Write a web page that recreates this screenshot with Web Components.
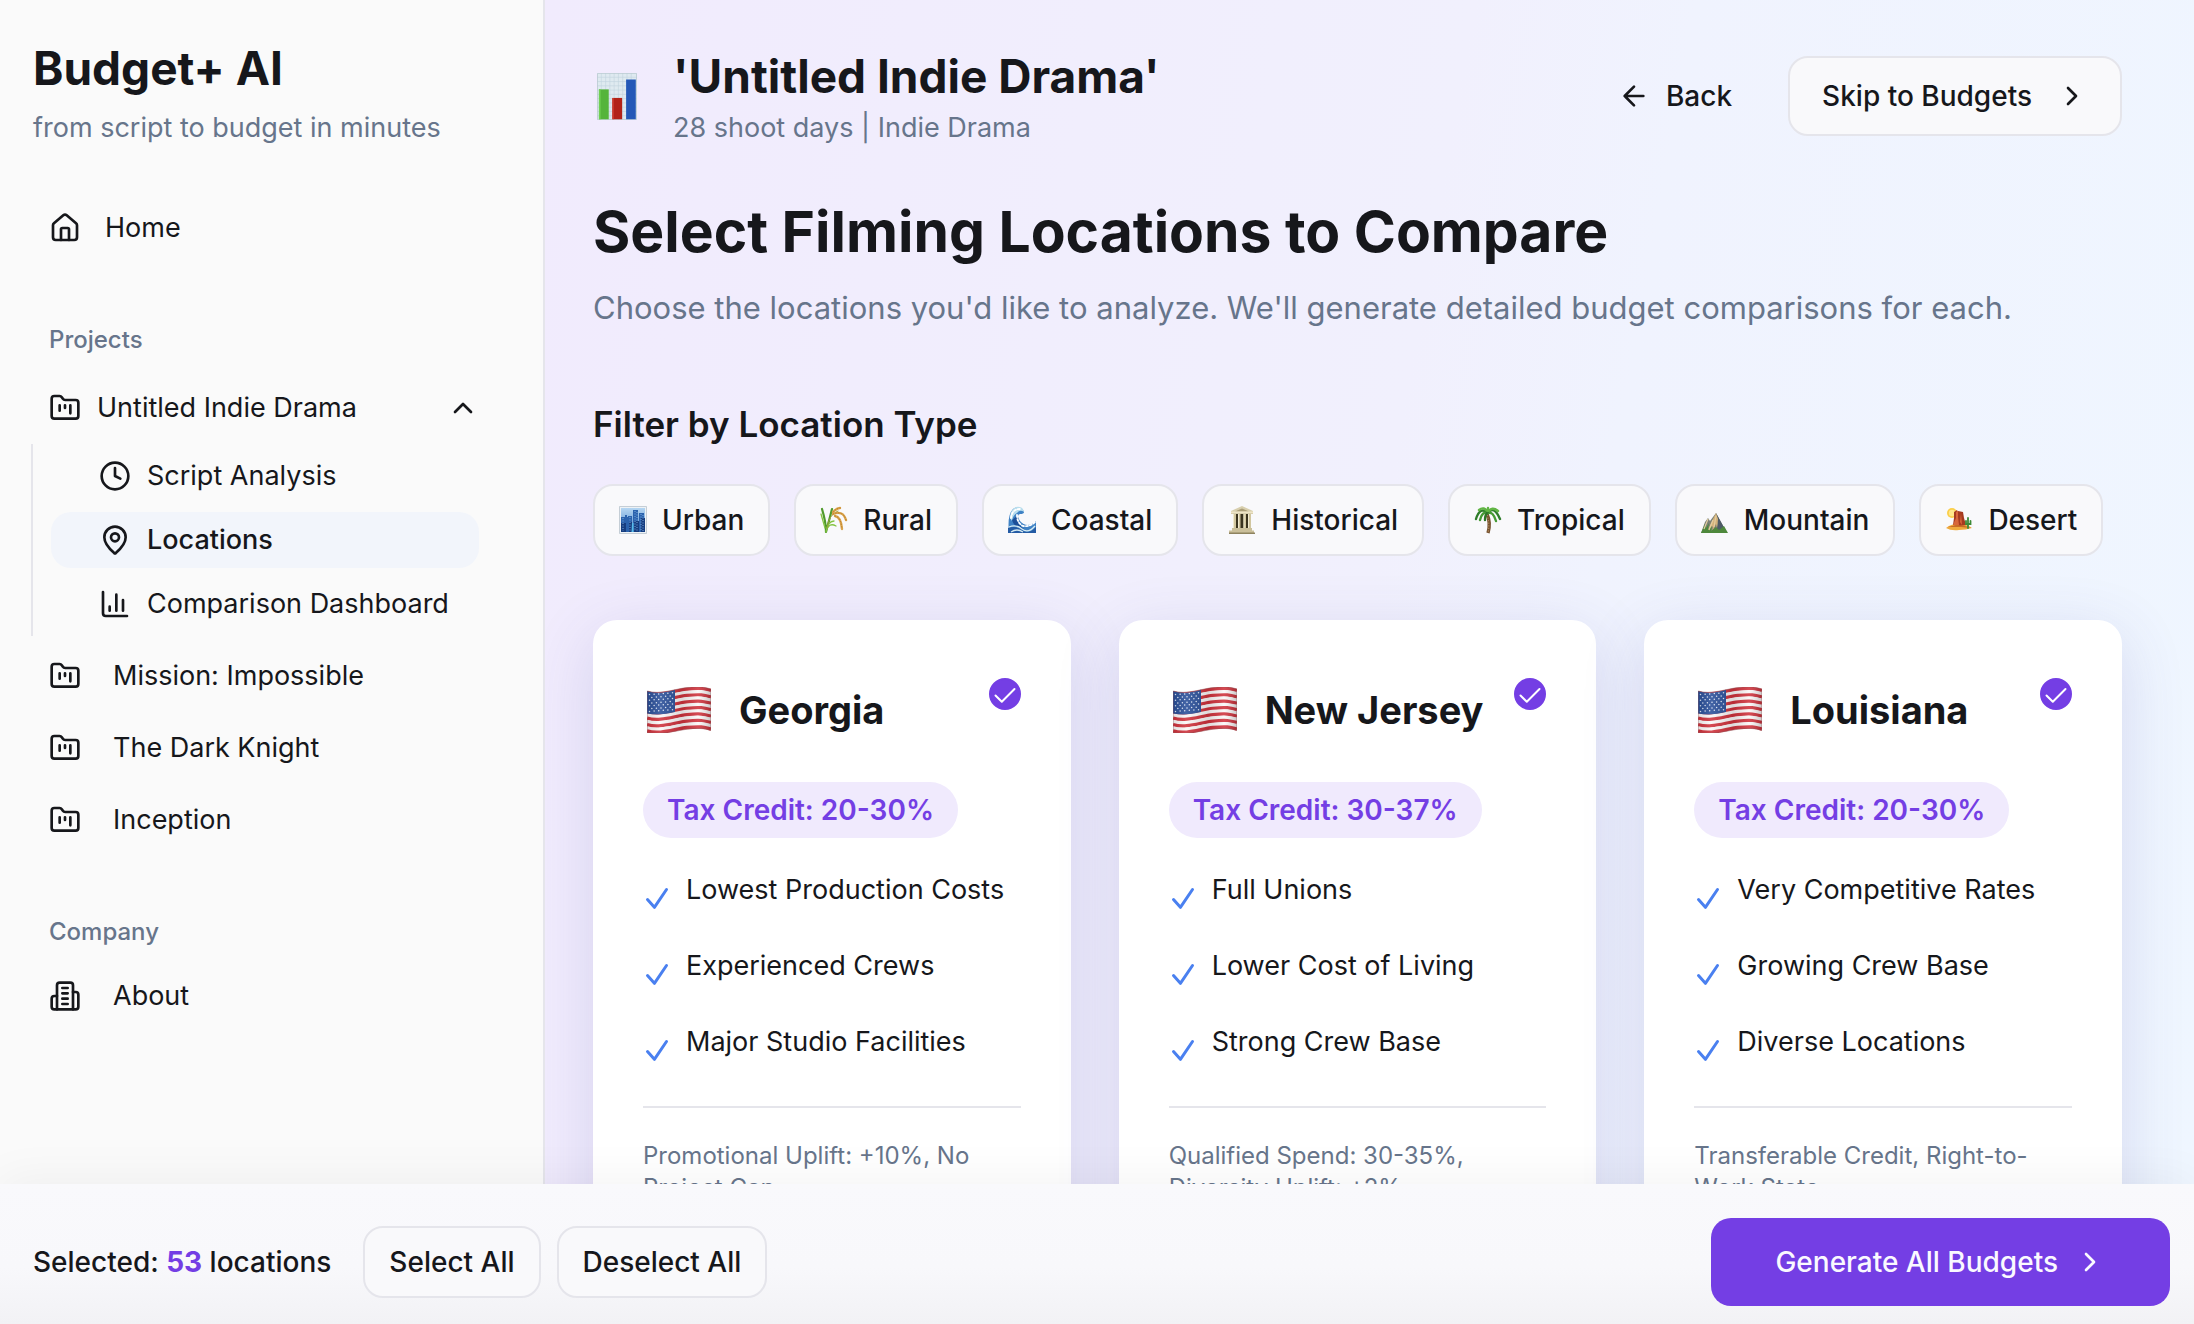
<!DOCTYPE html>
<html lang="en">
<head>
<meta charset="utf-8">
<meta name="viewport" content="width=device-width, initial-scale=1">
<title>Budget+ AI</title>
<style>
  :root {
    --ink: #16171b;
    --muted: #67758b;
    --line: #e5e5eb;
    --panel: #fafafa;
    --button: #f9f9fb;
    --accent: #743ee4;
    --accent-soft: #f0eafd;
    --blue: #4a80f0;
    --radius: 20px;
    --text: 27px;
    --title: 46px;
  }
  html, body { height: 100%; }
  body {
    margin: 0;
    font: 400 28px/40px Inter, "Liberation Sans", sans-serif;
    color: var(--ink);
    background: var(--panel);
  }
</style>
</head>
<body>
<app-shell>
  <side-bar slot="side">
    <nav-item icon="home" gap="24">Home</nav-item>
    <nav-group label="Projects" class="projects">
      <nav-toggle>Untitled Indie Drama</nav-toggle>
      <nav-branch>
        <nav-item icon="clock" nested>Script Analysis</nav-item>
        <nav-item icon="pin" nested current>Locations</nav-item>
        <nav-item icon="chart" nested>Comparison Dashboard</nav-item>
      </nav-branch>
      <nav-list>
        <nav-item icon="folder">Mission: Impossible</nav-item>
        <nav-item icon="folder">The Dark Knight</nav-item>
        <nav-item icon="folder">Inception</nav-item>
      </nav-list>
    </nav-group>
    <nav-group label="Company" class="company">
      <nav-item icon="building">About</nav-item>
    </nav-group>
  </side-bar>

  <project-header>
    <span slot="title">'Untitled Indie Drama'</span>
    <span slot="meta">28 shoot days | Indie Drama</span>
    <action-button kind="plain" slot="actions"><app-icon name="arrow-left" slot="before"></app-icon>Back</action-button>
    <action-button kind="outline-lg" slot="actions">Skip to Budgets<app-icon name="chevron-right" slot="after"></app-icon></action-button>
  </project-header>

  <page-intro>
    <span slot="title">Select Filming Locations to Compare</span>
    <span slot="lead">Choose the locations you'd like to analyze. We'll generate detailed budget comparisons for each.</span>
  </page-intro>

  <location-filter label="Filter by Location Type">
    <filter-chip icon="urban">Urban</filter-chip>
    <filter-chip icon="rural">Rural</filter-chip>
    <filter-chip icon="coastal">Coastal</filter-chip>
    <filter-chip icon="historical">Historical</filter-chip>
    <filter-chip icon="tropical">Tropical</filter-chip>
    <filter-chip icon="mountain">Mountain</filter-chip>
    <filter-chip icon="desert">Desert</filter-chip>
  </location-filter>

  <card-grid>
    <location-card name="Georgia" credit="20-30%">
      <feature-item>Lowest Production Costs</feature-item>
      <feature-item>Experienced Crews</feature-item>
      <feature-item>Major Studio Facilities</feature-item>
      <span slot="note">Promotional Uplift: +10%, No Project Cap</span>
    </location-card>
    <location-card name="New Jersey" credit="30-37%">
      <feature-item>Full Unions</feature-item>
      <feature-item>Lower Cost of Living</feature-item>
      <feature-item>Strong Crew Base</feature-item>
      <span slot="note">Qualified Spend: 30-35%, Diversity Uplift: +2%</span>
    </location-card>
    <location-card name="Louisiana" credit="20-30%">
      <feature-item>Very Competitive Rates</feature-item>
      <feature-item>Growing Crew Base</feature-item>
      <feature-item>Diverse Locations</feature-item>
      <span slot="note">Transferable Credit, Right-to-Work State</span>
    </location-card>
  </card-grid>

  <selection-bar slot="bar" count="53">
    <action-button kind="outline" slot="tools">Select All</action-button>
    <action-button kind="outline" slot="tools">Deselect All</action-button>
    <action-button kind="primary" slot="submit">Generate All Budgets<app-icon name="chevron-right" slot="after"></app-icon></action-button>
  </selection-bar>
</app-shell>

<script>
const define = (tag, render) => customElements.define(tag, class extends HTMLElement {
  constructor() {
    super();
    this.attachShadow({ mode: 'open' });
  }
  connectedCallback() {
    this.shadowRoot.innerHTML = '<style>:host,*{box-sizing:border-box}</style>' + render(this);
  }
});

/* Line icons on a 24-unit grid */
const LINES = {
  home: '<path d="M15 21v-8a1 1 0 0 0-1-1h-4a1 1 0 0 0-1 1v8"/><path d="M3 10a2 2 0 0 1 .71-1.53l7-6a2 2 0 0 1 2.58 0l7 6A2 2 0 0 1 21 10v9a2 2 0 0 1-2 2H5a2 2 0 0 1-2-2z"/>',
  folder: '<path d="M4 20h16a2 2 0 0 0 2-2V8a2 2 0 0 0-2-2h-7.93a2 2 0 0 1-1.66-.9l-.82-1.2A2 2 0 0 0 7.93 3H4a2 2 0 0 0-2 2v13c0 1.1.9 2 2 2Z"/><path d="M8 10v4M12 10v2M16 10v6"/>',
  clock: '<circle cx="12" cy="12" r="10"/><path d="M12 6v6l4 2"/>',
  pin: '<path d="M20 10c0 5-5.54 10.19-7.4 11.8a1 1 0 0 1-1.2 0C9.54 20.19 4 15 4 10a8 8 0 0 1 16 0"/><circle cx="12" cy="10" r="3"/>',
  chart: '<path d="M3 3v16a2 2 0 0 0 2 2h16M18 17V9M13 17V5M8 17v-3"/>',
  building: '<path d="M6 22V4a2 2 0 0 1 2-2h8a2 2 0 0 1 2 2v18Z"/><path d="M6 12H4a2 2 0 0 0-2 2v6a2 2 0 0 0 2 2h2M18 9h2a2 2 0 0 1 2 2v9a2 2 0 0 1-2 2h-2M10 6h4M10 10h4M10 14h4M10 18h4"/>',
  'chevron-up': '<path d="m18 15-6-6-6 6"/>',
  'chevron-right': '<path d="m9 18 6-6-6-6"/>',
  'arrow-left': '<path d="m12 19-7-7 7-7M19 12H5"/>'
};
define('app-icon', el => `
  <style>:host{display:block;flex:none;width:32px;height:32px}svg{display:block;width:100%;height:100%}</style>
  <svg viewBox="0 0 24 24" fill="none" stroke="currentColor" stroke-width="2" stroke-linecap="round" stroke-linejoin="round" aria-hidden="true">${LINES[el.getAttribute('name')]}</svg>`);

/* Small colour pictograms on a 28-unit grid */
const frond = (d, c) => `<path d="${d}" fill="none" stroke="${c}" stroke-width="2.4" stroke-linecap="round"/>`;
const PICTURES = {
  urban: `<defs><linearGradient id="s" x2="0" y2="1"><stop stop-color="#b5d6f2"/><stop offset="1" stop-color="#4b86cb"/></linearGradient></defs>
    <path fill="#eef2f5" stroke="#b9c4cd" stroke-width=".8" d="M.5.5h27v27H.5z"/><path fill="url(#s)" d="M2 2h24v24H2z"/>
    <path fill="#2b62ad" d="M2 11h4V9h2v2h1v15H2zM9 10h4v16H9zM14 4h5v22h-5zM20 7h5v19h-5z"/>
    <path fill="#163d80" d="M2 17h5v9H2zM10 16h3v10h-3zM15 15h5v11h-5zM22 12h4v14h-4z"/>
    <path fill="#58bdec" d="M13 17h1.500v9H12.500z"/>
    <path stroke="#8fc0ee" stroke-width=".8" stroke-dasharray="1 1.500" d="M4 12v13M11 11v14M16 5v20M18 6v20M22 8v17M24 9v16"/>`,
  rural: `<g fill="none" stroke-linecap="round"><path stroke="#4f9a2b" stroke-width="2.200" d="M6 26Q6 16 2 3M6 26Q9 15 12 3"/>
    <path stroke="#83c341" stroke-width="1.300" d="M6 26Q8 15 14 15M6 25Q9 16 16 20M5 22 1 8"/>
    <path stroke="#9aa13a" stroke-width="1" d="M7 22Q9 8 18 5"/>
    <path stroke="#d9a34a" stroke-width="2.400" d="M13 6Q17 2 20 2M13 8Q23 4 26 14M15 10Q21 11 22 23"/>
    <path stroke="#b97a28" stroke-width="1" stroke-dasharray=".5 2.200" d="M13 6Q17 2 20 2M13 8Q23 4 26 14M15 10Q21 11 22 23"/></g>`,
  coastal: `<path fill="#3f82c5" d="M1 27Q-1 9 5 3Q10-1 15 4Q18 8 12 8Q8 9 12 15Q19 23 28 15v12z"/>
    <path fill="#b8dded" d="M2 12Q2 4 8 1Q15 0 16 6Q12 3 9 7Q5 9 4 15z"/><path fill="#1c4f98" d="M4 14Q6 22 17 24Q9 18 9 10z"/>
    <path fill="none" stroke="#fff" stroke-width="1.800" stroke-linecap="round" stroke-dasharray="2 2" d="M3 12Q4 3 12 3M9 9Q9 17 15 20Q22 21 27 16"/>
    <path fill="#245ba4" d="M0 22Q7 19 14 24T28 21v6H0z"/><path fill="none" stroke="#d5ebf2" stroke-width="1.300" d="M1 21Q8 18 14 23T27 20M3 26Q9 22 15 26"/>`,
  historical: `<path fill="#d8cfae" d="M14 0 25 5v3H3V5z"/><path fill="#a99d76" d="M14 2.500 21 5.500H7z"/><path fill="#eee5c7" d="M3 5.500h22v1.500H3z"/>
    <path fill="#39331f" d="M6 8h16v15H6z"/><path fill="#d1c69f" d="M5 8h3v15H5zM10 8h2.500v15H10zM15.500 8H18v15h-2.500zM20 8h3v15h-3z"/>
    <path fill="#f0e9cf" d="M5 8h1v15H5zM10 8h1v15h-1zM15.500 8h1v15h-1zM20 8h1v15h-1z"/><path fill="#cabf9a" d="M4 22h20v2.500h2V28H1v-3.500h3z"/><path fill="#8e835f" d="M1 26.500h26V28H1z"/>`,
  tropical: `<path fill="none" stroke="#76522f" stroke-width="3.400" d="M13 8Q17 17 14 27"/><path fill="none" stroke="#b28b5b" stroke-width="1.200" stroke-dasharray="1.200 1.400" d="M13 9Q16 18 14 27"/>`
    + frond('M14 7Q6 0 2 13', '#2f7d2b') + frond('M14 7Q8 5 6 14', '#459a34') + frond('M14 7Q20-1 26 13', '#2f7d2b')
    + frond('M14 7Q19 5 22 15', '#459a34') + frond('M14 6Q10 0 5 4', '#61b544') + frond('M14 6Q18 0 24 5', '#61b544') + frond('M14 6Q11 8 11 14', '#2c7428') + frond('M14 5V2', '#61b544'),
  mountain: `<path fill="#7b8076" d="M0 27 4 16l3-4 2 3 6-8 11 20z"/><path fill="#4e5b66" d="m15 7 5 9 6 11H15l2-10z"/>
    <path fill="#d2b27b" d="m15 7-5 10-4 9 6-6-1 6 4-8 1 4 1-9z"/><path fill="#4e883c" d="M0 27 4 18l1 4 3-5-1 7 4-4-1 5 5-4 3 3 5-4 4 7z"/>
    <path fill="none" stroke="#e3cda0" stroke-width="1.200" d="m7 13-4 10M12 14 8 24M15 10l-2 11"/>`,
  desert: `<circle cx="7" cy="7" r="5" fill="#fbcf4b"/><circle cx="7" cy="7" r="3.200" fill="#ffe88a"/>
    <path fill="#efaa3d" d="M1 22Q8 17 16 18T27 22Q21 24 14 24 6 25 1 22z"/><path fill="#a63b20" d="m8 19 1-7V6l3-2 1 2V5l5 1 1 6 2 7-6 1z"/>
    <path fill="#d8673a" d="m8 19 3-7V6l2-1v6l1 8zM16 7l1 12-2-3z"/><path fill="#c96c26" d="m3 21 8-2 9 1 6 2-10-1z"/>
    <path stroke="#3d8b37" stroke-width="1.800" stroke-linecap="round" fill="none" d="M23 22V12M21 15v3h2M25.500 15v3H23"/>`,
  report: `<path fill="#dfeaf0" d="M0 0h28v33H0z"/><path stroke="#c1d3dd" stroke-width=".4" d="M0 3h28M0 6h28M0 9h28M0 12h28M0 15h28M0 18h28M0 21h28M0 24h28M0 27h28M0 30h28M3 0v33M6 0v33M9 0v33M12 0v33M15 0v33M18 0v33M21 0v33M24 0v33"/>
    <path fill="none" stroke="#bccbd3" stroke-width=".6" d="M.3.3h27.400v32.400H.3z"/><path fill="#55b43b" d="M1.300 11.500H8.200v21H1.300z"/><path fill="#b22318" d="M10.700 17.500h6.900v15h-6.900z"/><path fill="#2458b7" d="M20.400 4.500h6.800v28h-6.800z"/>
    <path fill="#6fcf52" d="M1.300 11.500h1.200v21H1.300z"/><path fill="#d14234" d="M10.700 17.500h1v15h-1z"/>`
};
define('app-picture', el => `
  <style>:host{display:block;flex:none;width:28px;height:28px}svg{display:block;width:100%;height:100%}</style>
  <svg viewBox="${el.getAttribute('name') === 'report' ? '0 0 28 33' : '0 0 28 28'}" aria-hidden="true">${PICTURES[el.getAttribute('name')]}</svg>`);

/* Waving flag: thirteen stripes that share one curve */
define('us-flag', () => {
  const step = 3.2;
  const wave = y => `M0 ${y + 4}C13 ${y + 8} 27 ${y + 2} 40 ${y + .6}S57 ${y} 64 ${y + 2}`;
  let stripes = '';
  for (let i = 0; i < 13; i++) stripes += `<path d="${wave(i * step + step / 2)}" fill="none" stroke="${i % 2 ? '#fbf7f7' : '#d0323c'}" stroke-width="${step + .3}"/>`;
  let stars = '';
  for (let r = 0; r < 7; r++) for (let c = 0; c < 6 - r % 2; c++)
    stars += `<circle cx="${2.5 + c * 4.6 + (r % 2) * 2.3}" cy="${7.6 + r * 2.8 - c * .35}" r=".75"/>`;
  return `
  <style>:host{display:block;flex:none;width:64px;height:46px}svg{display:block;width:100%;height:100%}</style>
  <svg viewBox="0 0 64 46" aria-hidden="true"><defs><linearGradient id="g"><stop stop-opacity=".1"/><stop offset=".2" stop-color="#fff" stop-opacity=".12"/><stop offset=".55" stop-opacity=".12"/><stop offset=".8" stop-color="#fff" stop-opacity=".12"/><stop offset="1" stop-opacity=".2"/></linearGradient></defs>
  ${stripes}<path fill="#2a4f99" d="M0 4C10 7 19 5.500 28 2.800V25Q14 29 0 26.500z"/><g fill="#dfe8f7">${stars}</g>
  <path fill="url(#g)" stroke="#8c5458" stroke-width=".5" d="M.2 4C13 8 27 2 40 .6S57 0 63.800 2V43.500C57 41 48 41 40 42.200S13 48 .2 45.600z"/></svg>`;
});

define('app-shell', () => `
  <style>
    :host{display:flex;flex-direction:column;height:100vh}
    .body{flex:1;min-height:0;display:flex}
    main{flex:1;min-width:0;overflow:hidden;padding:44px 72px 48px 48px;background:linear-gradient(100deg,#f1ebfd 0%,#f1f0fd 50%,#f0f3fe 62%,#eff6ff 100%)}
  </style>
  <div class="body"><slot name="side"></slot><main><slot></slot></main></div><slot name="bar"></slot>`);

define('side-bar', () => `
  <style>
    :host{display:block;flex:none;width:545px;overflow:hidden;background:var(--panel);border-right:2px solid var(--line)}
    header{padding:32px 32px 48px 33px}
    .brand{font-size:var(--title);line-height:72px;font-weight:700;margin:0}
    p{margin:0;font-size:var(--text);line-height:48px;color:var(--muted)}
    nav{padding:0 64px 0 33px;font-size:var(--text)}
    ::slotted(nav-group){margin-top:68px}
  </style>
  <header><h2 class="brand">Budget+ AI</h2><p>from script to budget in minutes</p></header>
  <nav><slot></slot></nav>`);

define('nav-group', el => `
  <style>:host{display:block}h3{margin:0 0 ${el.className === 'company' ? 20 : 24}px;padding-left:16px;font-size:24px;line-height:32px;font-weight:500;color:var(--muted)}</style>
  <h3>${el.getAttribute('label')}</h3><slot></slot>`);

define('nav-list', () => `
  <style>:host{display:flex;flex-direction:column;gap:16px;margin-top:12px}</style><slot></slot>`);

define('nav-branch', () => `
  <style>:host{display:flex;flex-direction:column;gap:8px;margin:8px 0 0 -2px;padding:4px 0 4px 18px;border-left:2px solid var(--line)}</style><slot></slot>`);

define('nav-item', el => `
  <style>
    :host{display:block}
    a{display:flex;align-items:center;gap:${el.getAttribute('gap') || 32}px;height:56px;padding-left:16px;color:inherit;text-decoration:none;border-radius:var(--radius)}
    :host([nested]) a{gap:16px;padding-left:48px}
    :host([current]) a{background:#f2f5fb;font-weight:500}
  </style>
  <a href="#"${el.hasAttribute('current') ? ' aria-current="page"' : ''}><app-icon name="${el.getAttribute('icon')}"></app-icon><span><slot></slot></span></a>`);

define('nav-toggle', () => `
  <style>
    :host{display:block}
    button{display:flex;align-items:center;gap:16px;width:100%;height:56px;padding:0 0 0 16px;border:0;background:none;font:inherit;color:inherit;text-align:left}
    span{flex:1}
  </style>
  <button type="button" aria-expanded="true"><app-icon name="folder"></app-icon><span><slot></slot></span><app-icon name="chevron-up"></app-icon></button>`);

define('action-button', () => `
  <style>
    :host{display:block;flex:none}
    button{display:flex;align-items:center;gap:16px;font:inherit;font-weight:500;color:inherit;border:0;background:none;border-radius:var(--radius);white-space:nowrap}
    :host([kind=plain]) button{height:80px;padding:0 32px}
    :host([kind=outline-lg]) button{height:80px;padding:0 32px;gap:24px;border:2px solid var(--line);background:var(--button)}
    :host([kind=outline]) button{height:72px;padding:0 24px;border:2px solid var(--line);background:var(--button)}
    :host([kind=primary]) button{height:88px;padding:0 64px;color:#faf9ff;background:var(--accent)}
  </style>
  <button type="button"><slot name="before"></slot><span><slot></slot></span><slot name="after"></slot></button>`);

define('project-header', () => `
  <style>
    :host{display:flex;align-items:center;justify-content:space-between}
    .project{display:flex;align-items:center;gap:36px;padding-left:4px}
    app-picture{width:40px;height:47px}
    h2{margin:0;font-size:var(--title);line-height:64px;font-weight:700}
    p{margin:0;font-size:var(--text);color:var(--muted)}
    .actions{display:flex;gap:24px}
  </style>
  <div class="project"><app-picture name="report"></app-picture><div><h2><slot name="title"></slot></h2><p><slot name="meta"></slot></p></div></div>
  <div class="actions"><slot name="actions"></slot></div>`);

define('page-intro', () => `
  <style>
    :host{display:block;margin-top:48px}
    h1{margin:0 0 16px;font-size:57px;line-height:72px;font-weight:700}
    p{margin:0;font-size:31px;line-height:48px;color:var(--muted)}
  </style>
  <h1><slot name="title"></slot></h1><p><slot name="lead"></slot></p>`);

define('location-filter', el => `
  <style>
    :host{display:block;margin-top:68px}
    h2{margin:0 0 36px;font-size:35px;line-height:48px;font-weight:600}
    .chips{display:flex;flex-wrap:wrap;gap:24px}
  </style>
  <h2>${el.getAttribute('label')}</h2><div class="chips"><slot></slot></div>`);

define('filter-chip', el => `
  <style>
    :host{display:block}
    button{display:flex;align-items:center;gap:15px;height:72px;padding:0 24px;font:inherit;font-weight:500;color:inherit;border:2px solid var(--line);border-radius:var(--radius);background:var(--button)}
  </style>
  <button type="button"><app-picture name="${el.getAttribute('icon')}"></app-picture><span><slot></slot></span></button>`);

define('card-grid', () => `
  <style>:host{display:grid;grid-template-columns:repeat(3,minmax(0,1fr));gap:48px;margin-top:64px}</style><slot></slot>`);

define('location-card', el => `
  <style>
    :host{display:block;padding:50px;border-radius:24px;background:#fff;box-shadow:0 16px 64px rgba(70,70,160,.16)}
    header{display:flex;justify-content:space-between;height:80px}
    label{display:flex;align-items:center;gap:28px;padding-left:4px;font-size:38px;line-height:48px;font-weight:700;white-space:nowrap}
    .tick{display:grid;flex:none;width:32px;height:32px;margin-top:8px}
    .tick>*{grid-area:1/1;width:32px;height:32px;margin:0}
    input{appearance:none;border:2px solid var(--accent);border-radius:50%}
    input:checked{background:var(--accent)}
    svg{pointer-events:none}
    .credit{display:inline-block;margin-top:32px;padding:0 24px;border-radius:28px;background:var(--accent-soft);color:var(--accent);line-height:56px;font-weight:600;vertical-align:top}
    .features{display:flex;flex-direction:column;gap:28px;margin-top:28px}
    footer{margin-top:40px;padding-top:32px;border-top:2px solid var(--line);font-size:24px;line-height:32px;color:var(--muted)}
  </style>
  <header>
    <label for="pick"><us-flag></us-flag>${el.getAttribute('name')}</label>
    <span class="tick"><input id="pick" type="checkbox" checked><svg viewBox="0 0 32 32" fill="none" stroke="#fff" stroke-width="2" stroke-linecap="round" stroke-linejoin="round" aria-hidden="true"><path d="m6.500 17.500 6.300 6.300L25.500 11"/></svg></span>
  </header>
  <span class="credit">Tax Credit: ${el.getAttribute('credit')}</span>
  <div class="features" role="list"><slot></slot></div>
  <footer><slot name="note"></slot></footer>`);

define('feature-item', el => (el.setAttribute('role', 'listitem'), `
  <style>:host{display:flex;gap:15px;font-size:var(--text);line-height:48px}svg{flex:none;width:28px;height:28px;margin-top:18px}</style>
  <svg viewBox="0 0 28 28" fill="none" stroke="var(--blue)" stroke-width="3" stroke-linecap="round" stroke-linejoin="round" aria-hidden="true"><path d="m4.500 15.500 6.900 7.800L23.500 5.500"/></svg><span><slot></slot></span>`));

define('selection-bar', el => `
  <style>
    :host{display:flex;align-items:center;justify-content:space-between;flex:none;z-index:1;height:140px;padding:16px 24px 0 33px;background:linear-gradient(#f9f9fc 0%,#f8f8fb 60%,#f2f2f5 100%);box-shadow:0 -4px 48px rgba(0,0,0,.05)}
    .left,.tools{display:flex;align-items:center}
    .left{gap:32px;font-weight:500}
    .tools{gap:16px}
    b{font-weight:700;color:var(--accent)}
  </style>
  <div class="left"><span>Selected: <b>${el.getAttribute('count')}</b> locations</span><div class="tools"><slot name="tools"></slot></div></div>
  <slot name="submit"></slot>`);
</script>
</body>
</html>
